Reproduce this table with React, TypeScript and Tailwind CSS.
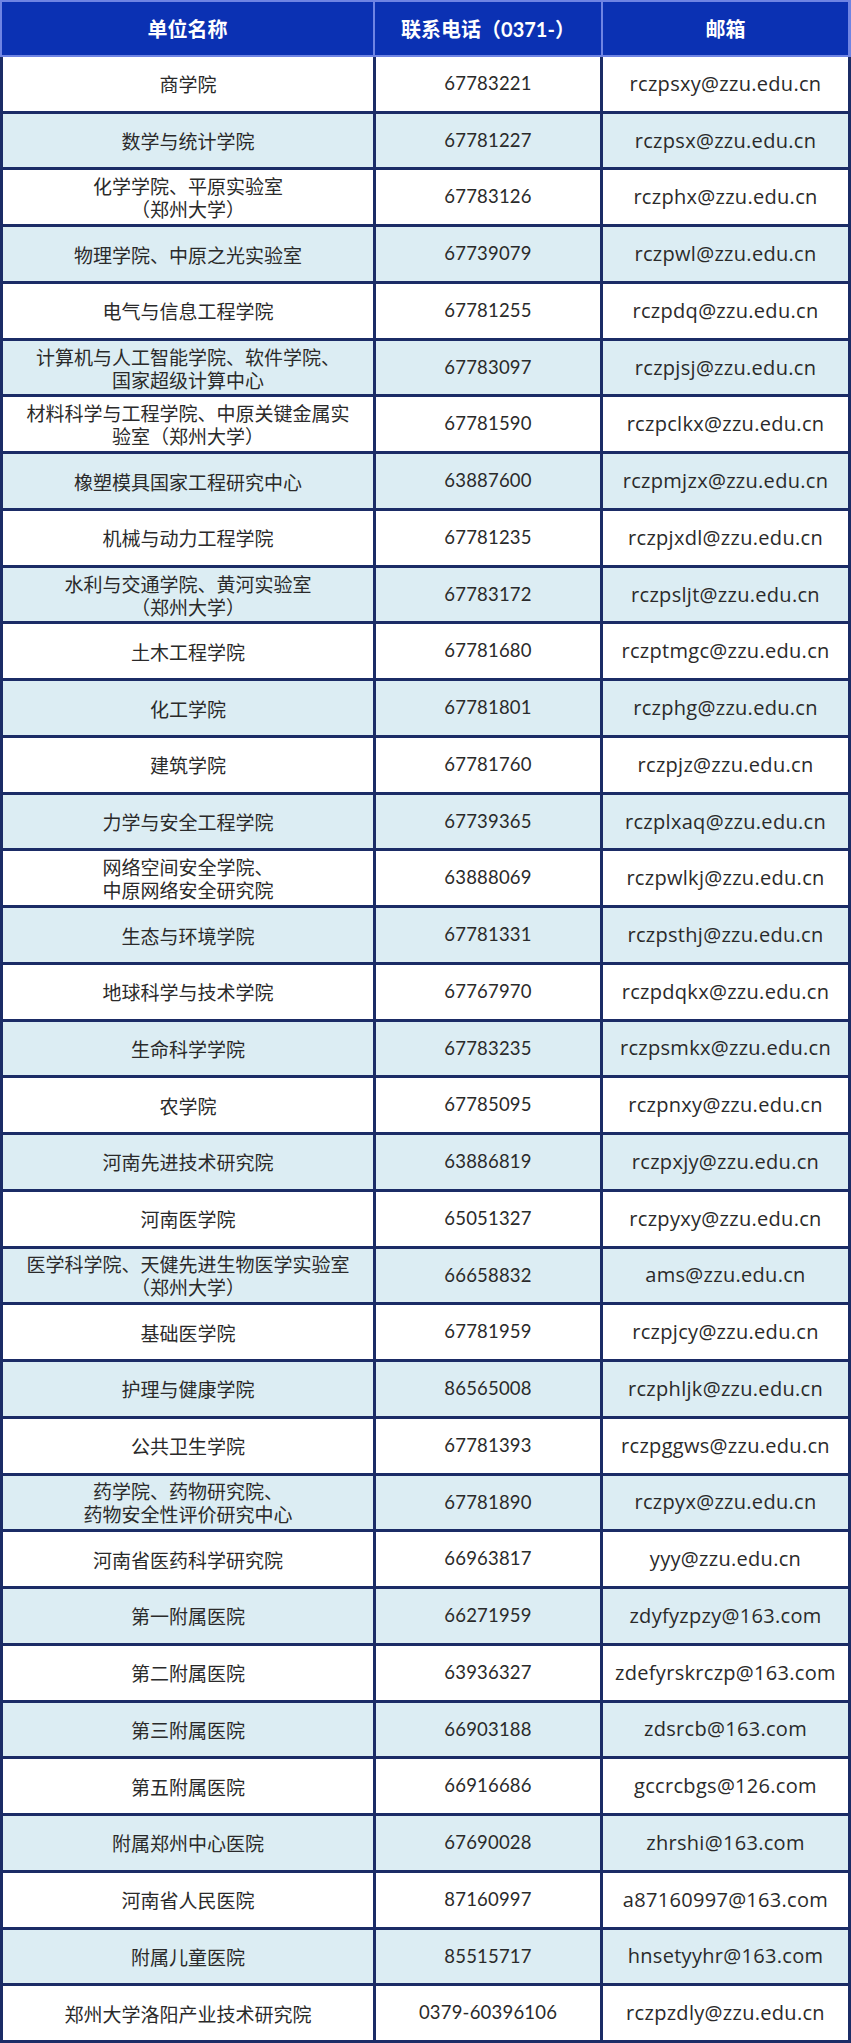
import React from "react";

type Row = [string, string, string];

const rows: Row[] = [
  ["商学院", "67783221", "rczpsxy@zzu.edu.cn"],
  ["数学与统计学院", "67781227", "rczpsx@zzu.edu.cn"],
  ["化学学院、平原实验室\n（郑州大学）", "67783126", "rczphx@zzu.edu.cn"],
  ["物理学院、中原之光实验室", "67739079", "rczpwl@zzu.edu.cn"],
  ["电气与信息工程学院", "67781255", "rczpdq@zzu.edu.cn"],
  ["计算机与人工智能学院、软件学院、\n国家超级计算中心", "67783097", "rczpjsj@zzu.edu.cn"],
  ["材料科学与工程学院、中原关键金属实\n验室（郑州大学）", "67781590", "rczpclkx@zzu.edu.cn"],
  ["橡塑模具国家工程研究中心", "63887600", "rczpmjzx@zzu.edu.cn"],
  ["机械与动力工程学院", "67781235", "rczpjxdl@zzu.edu.cn"],
  ["水利与交通学院、黄河实验室\n（郑州大学）", "67783172", "rczpsljt@zzu.edu.cn"],
  ["土木工程学院", "67781680", "rczptmgc@zzu.edu.cn"],
  ["化工学院", "67781801", "rczphg@zzu.edu.cn"],
  ["建筑学院", "67781760", "rczpjz@zzu.edu.cn"],
  ["力学与安全工程学院", "67739365", "rczplxaq@zzu.edu.cn"],
  ["网络空间安全学院、\n中原网络安全研究院", "63888069", "rczpwlkj@zzu.edu.cn"],
  ["生态与环境学院", "67781331", "rczpsthj@zzu.edu.cn"],
  ["地球科学与技术学院", "67767970", "rczpdqkx@zzu.edu.cn"],
  ["生命科学学院", "67783235", "rczpsmkx@zzu.edu.cn"],
  ["农学院", "67785095", "rczpnxy@zzu.edu.cn"],
  ["河南先进技术研究院", "63886819", "rczpxjy@zzu.edu.cn"],
  ["河南医学院", "65051327", "rczpyxy@zzu.edu.cn"],
  ["医学科学院、天健先进生物医学实验室\n（郑州大学）", "66658832", "ams@zzu.edu.cn"],
  ["基础医学院", "67781959", "rczpjcy@zzu.edu.cn"],
  ["护理与健康学院", "86565008", "rczphljk@zzu.edu.cn"],
  ["公共卫生学院", "67781393", "rczpggws@zzu.edu.cn"],
  ["药学院、药物研究院、\n药物安全性评价研究中心", "67781890", "rczpyx@zzu.edu.cn"],
  ["河南省医药科学研究院", "66963817", "yyy@zzu.edu.cn"],
  ["第一附属医院", "66271959", "zdyfyzpzy@163.com"],
  ["第二附属医院", "63936327", "zdefyrskrczp@163.com"],
  ["第三附属医院", "66903188", "zdsrcb@163.com"],
  ["第五附属医院", "66916686", "gccrcbgs@126.com"],
  ["附属郑州中心医院", "67690028", "zhrshi@163.com"],
  ["河南省人民医院", "87160997", "a87160997@163.com"],
  ["附属儿童医院", "85515717", "hnsetyyhr@163.com"],
  ["郑州大学洛阳产业技术研究院", "0379-60396106", "rczpzdly@zzu.edu.cn"],
];

const cjk = "font-['Noto_Sans_CJK_SC',sans-serif]";
const latin = "font-['Lato','Noto_Sans_CJK_SC',sans-serif]";
const mail = "font-['Open_Sans','Noto_Sans_CJK_SC',sans-serif]";

export default function App() {
  return (
    <div className="w-[851px] h-[2043px] flex flex-col bg-[#1b2c66]">
      <div className="h-[57px] shrink-0 bg-[#6f84e3] pt-[2px] pb-[2px] pl-[2px] pr-[3px] grid grid-cols-[371px_226px_1fr] gap-x-[2px]">
        <div className={`bg-[#0b31b3] flex items-center justify-center text-white font-bold text-[20px] ${cjk}`}>单位名称</div>
        <div className={`bg-[#0b31b3] flex items-center justify-center text-white font-bold text-[20px] ${cjk}`}>
          <span>联系电话</span>
          <span className={latin}>（0371-）</span>
        </div>
        <div className={`bg-[#0b31b3] flex items-center justify-center text-white font-bold text-[20px] ${cjk}`}>邮箱</div>
      </div>
      <div className="flex-1 grid grid-cols-[370px_224px_1fr] grid-rows-[repeat(35,1fr)] gap-[3px] pl-[3px] pr-[3px] pb-[3px]">
        {rows.map((r, i) => {
          const bg = i % 2 === 0 ? "bg-white" : "bg-[#dcedf3]";
          return (
            <React.Fragment key={i}>
              <div className={`${bg} flex items-center justify-center text-center whitespace-pre-line text-[19px] leading-[23px] text-[#2a2a2a] ${cjk}`}>
                {r[0]}
              </div>
              <div className={`${bg} flex items-center justify-center text-[18.5px] tracking-[0.2px] text-[#2a2a2a] ${latin}`}>{r[1]}</div>
              <div className={`${bg} flex items-center justify-center text-[20px] tracking-[0.3px] text-[#2a2a2a] ${mail}`}>{r[2]}</div>
            </React.Fragment>
          );
        })}
      </div>
    </div>
  );
}
